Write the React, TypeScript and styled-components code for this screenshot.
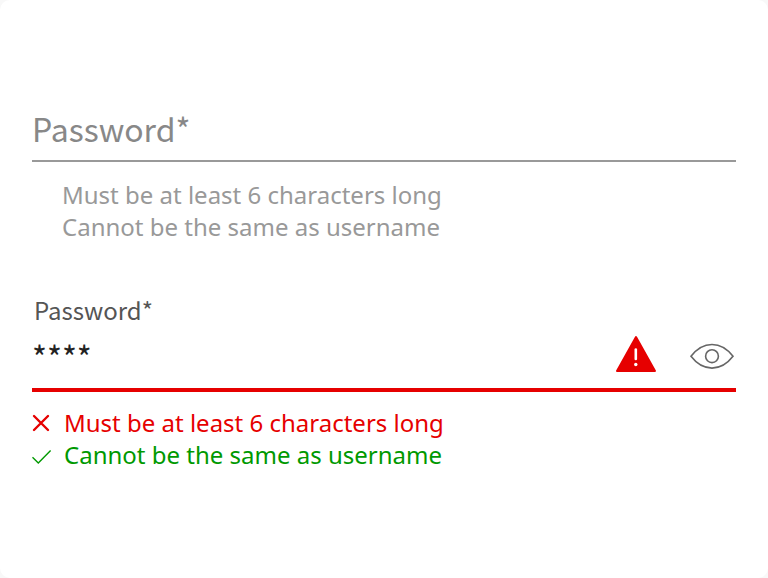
import React from 'react';
import styled, { createGlobalStyle } from 'styled-components';

const Global = createGlobalStyle`
  * { box-sizing: border-box; }
  body { margin: 0; background: #f8f8f8; }
`;

const Card = styled.main`
  width: 768px;
  height: 578px;
  padding: 105px 32px 0;
  background: #fff;
  border-radius: 10px;
  overflow: hidden;
  font-family: 'Noto Sans', sans-serif;
`;

const EmptyField = styled.div`
  height: 57px;
  border-bottom: 2px solid #999;
  font-family: 'Noto Sans CJK SC', sans-serif;
  font-size: 32px;
  line-height: 46px;
  color: #888;
`;

const Hints = styled.ul<{ $top: number; $left: number }>`
  list-style: none;
  margin: 0;
  padding: ${(p) => p.$top}px 0 0 ${(p) => p.$left}px;
`;

const Hint = styled.li<{ $color: string }>`
  display: flex;
  align-items: center;
  height: 32px;
  font-size: 24px;
  line-height: 32px;
  white-space: nowrap;
  color: ${(p) => p.$color};
`;

const HintIcon = styled.svg`
  flex: none;
  width: 20px;
  height: 20px;
  margin-right: 12px;
`;

const FilledField = styled.div`
  margin-top: 49px;
  height: 100px;
  border-bottom: 4px solid #e60000;
`;

const Label = styled.div`
  padding-left: 2px;
  height: 39px;
  font-family: 'Noto Sans CJK SC', sans-serif;
  font-size: 24px;
  line-height: 36px;
  color: #555;
`;

const InputRow = styled.div`
  display: flex;
  align-items: center;
  height: 50px;
`;

const Value = styled.div`
  flex: 1;
  font-family: 'Noto Sans CJK SC', sans-serif;
  font-size: 32px;
  line-height: 50px;
  color: #222;
`;

const WarningIcon = styled.svg`
  width: 42px;
  height: 38px;
  margin: 0 32px 4px 0;
`;

const EyeIcon = styled.svg`
  width: 46px;
  height: 28px;
  margin-right: 1px;
`;

export default function App() {
  return (
    <>
      <Global />
      <Card>
        <EmptyField>Password*</EmptyField>
        <Hints $top={17} $left={30}>
          <Hint $color="#999">Must be at least 6 characters long</Hint>
          <Hint $color="#999">Cannot be the same as username</Hint>
        </Hints>
        <FilledField>
          <Label>Password*</Label>
          <InputRow>
            <Value>****</Value>
            <WarningIcon viewBox="0 0 42 38">
              <path d="M21 2 40 36H2Z" fill="#e60000" stroke="#e60000" strokeWidth="2" strokeLinejoin="round" />
              <path d="M20.8 14.5v9.5" stroke="#fff" strokeWidth="2.6" strokeLinecap="round" />
              <circle cx="20.8" cy="29.5" r="1.7" fill="#fff" />
            </WarningIcon>
            <EyeIcon viewBox="0 0 46 28" fill="none" stroke="#666" strokeWidth="1.6">
              <path d="M2 14.3C14-1.5 32-1.5 44 14.3C32 30 14 30 2 14.3Z" />
              <circle cx="23" cy="14.2" r="6.4" />
            </EyeIcon>
          </InputRow>
        </FilledField>
        <Hints $top={15} $left={0}>
          <Hint $color="#e60000">
            <HintIcon viewBox="0 0 20 20" fill="none" stroke="currentColor" strokeWidth="2.4" strokeLinecap="round">
              <path d="M2 3 16 17M16 3 2 17" />
            </HintIcon>
            Must be at least 6 characters long
          </Hint>
          <Hint $color="#009900">
            <HintIcon viewBox="0 0 20 20" fill="none" stroke="currentColor" strokeWidth="1.4">
              <path d="M.5 12.2 6.3 17.9 18.6 5.5" />
            </HintIcon>
            Cannot be the same as username
          </Hint>
        </Hints>
      </Card>
    </>
  );
}
